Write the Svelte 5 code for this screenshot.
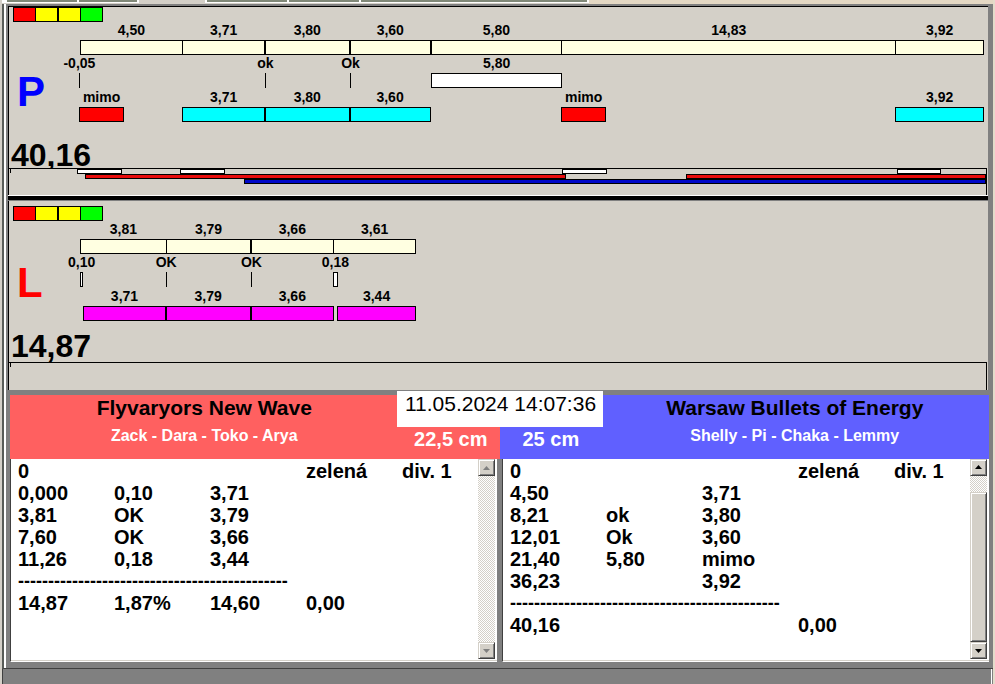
<script>
  const RANGE = 40.18;
  const lights = ['red', 'yellow', 'yellow thick', 'lime'];
  const tabs = [70, 58, 0, 81, 70, 226];

  const right = {
    letter: 'P',
    total: '40,16',
    lanes: [
      [
        { at: 0, len: 4.53, text: '4,50', kind: 'cream' },
        { at: 4.53, len: 3.66, text: '3,71', kind: 'cream' },
        { at: 8.19, len: 3.78, text: '3,80', kind: 'cream thick' },
        { at: 11.97, len: 3.6, text: '3,60', kind: 'cream thick' },
        { at: 15.57, len: 5.83, text: '5,80', kind: 'cream thick' },
        { at: 21.4, len: 14.83, text: '14,83', kind: 'cream' },
        { at: 36.23, len: 3.92, text: '3,92', kind: 'cream' }
      ],
      [
        { at: -0.05, len: 0, text: '-0,05', kind: 'tick' },
        { at: 8.22, len: 0, text: 'ok', kind: 'tick' },
        { at: 12, len: 0, text: 'Ok', kind: 'tick' },
        { at: 15.6, len: 5.8, text: '5,80', kind: 'white' }
      ],
      [
        { at: -0.05, len: 1.97, text: 'mimo', kind: 'red' },
        { at: 4.53, len: 3.66, text: '3,71', kind: 'cyan' },
        { at: 8.19, len: 3.78, text: '3,80', kind: 'cyan thick' },
        { at: 11.97, len: 3.58, text: '3,60', kind: 'cyan thick' },
        { at: 21.38, len: 1.97, text: 'mimo', kind: 'red' },
        { at: 36.23, len: 3.92, text: '3,92', kind: 'cyan' }
      ]
    ],
    tracks: [
      [
        { at: 3.02, len: 1.95, kind: 'white' },
        { at: 7.6, len: 1.95, kind: 'white' },
        { at: 24.6, len: 1.95, kind: 'white' },
        { at: 39.49, len: 1.95, kind: 'white' }
      ],
      [
        { at: 3.38, len: 21.36, kind: 'brick' },
        { at: 30.11, len: 13.33, kind: 'brick' }
      ],
      [{ at: 10.44, len: 33, kind: 'blue' }]
    ]
  };

  const left = {
    letter: 'L',
    total: '14,87',
    lanes: [
      [
        { at: 0, len: 3.81, text: '3,81', kind: 'cream' },
        { at: 3.81, len: 3.76, text: '3,79', kind: 'cream' },
        { at: 7.57, len: 3.69, text: '3,66', kind: 'cream thick' },
        { at: 11.26, len: 3.63, text: '3,61', kind: 'cream' }
      ],
      [
        { at: 0, len: 0.1, text: '0,10', kind: 'white' },
        { at: 3.81, len: 0, text: 'OK', kind: 'tick' },
        { at: 7.6, len: 0, text: 'OK', kind: 'tick' },
        { at: 11.24, len: 0.18, text: '0,18', kind: 'white' }
      ],
      [
        { at: 0.13, len: 3.65, text: '3,71', kind: 'magenta' },
        { at: 3.78, len: 3.79, text: '3,79', kind: 'magenta thick' },
        { at: 7.57, len: 3.69, text: '3,66', kind: 'magenta thick' },
        { at: 11.43, len: 3.46, text: '3,44', kind: 'magenta' }
      ]
    ],
    tracks: []
  };

  const dashes = '-'.repeat(45);

  const leftRows = [
    ['0', '', '', 'zelená', 'div. 1'],
    ['0,000', '0,10', '3,71', '', ''],
    ['3,81', 'OK', '3,79', '', ''],
    ['7,60', 'OK', '3,66', '', ''],
    ['11,26', '0,18', '3,44', '', ''],
    null,
    ['14,87', '1,87%', '14,60', '0,00', '']
  ];

  const rightRows = [
    ['0', '', '', 'zelená', 'div. 1'],
    ['4,50', '', '3,71', '', ''],
    ['8,21', 'ok', '3,80', '', ''],
    ['12,01', 'Ok', '3,60', '', ''],
    ['21,40', '5,80', 'mimo', '', ''],
    ['36,23', '', '3,92', '', ''],
    null,
    ['40,16', '', '', '0,00', '']
  ];

  // Adds to each item the free time between it and the one before.
  function spaced(items, range) {
    let end = 0;
    return items.map((item) => {
      const gap = item.at - end;
      end = item.at + item.len;
      return { ...item, before: (gap / range) * 100, size: (item.len / range) * 100 };
    });
  }
</script>

{#snippet lane(panel)}
  <section class="panel {panel.letter === 'P' ? 'right-lane' : 'left-lane'}">
    <div class="lights">
      {#each lights as light}<i class={light}></i>{/each}
    </div>
    <div class="body">
      <strong class="letter">{panel.letter}</strong>
      <div class="chart">
        {#each panel.lanes as items}
          <div class="row">
            {#each spaced(items, RANGE) as item}
              <div class="item" style="margin-left:{item.before}%;width:calc({item.size}% + 1px)">
                <span>{item.text}</span>
                <b class={item.kind}></b>
              </div>
            {/each}
          </div>
        {/each}
      </div>
    </div>
    <div class="total">{panel.total}</div>
    <div class="ruler">
      {#each panel.tracks as items}
        <div class="track">
          {#each spaced(items, 43.47) as item}
            <b class={item.kind} style="margin-left:{item.before}%;width:calc({item.size}% + 1px)"></b>
          {/each}
        </div>
      {/each}
    </div>
  </section>
{/snippet}

{#snippet list(rows, active)}
  <div class="list">
    <table>
      <tbody>
        {#each rows as row}
          <tr>
            {#if row}
              {#each row as cell}<td>{cell}</td>{/each}
            {:else}
              <td colspan="5" class="rule">{dashes}</td>
            {/if}
          </tr>
        {/each}
      </tbody>
    </table>
    <div class="scrollbar">
      <button aria-label="Up" disabled={!active}>
        <svg width="7" height="4" viewBox="0 0 7 4"><path d="M0 4h7L3.5 0z" /></svg>
      </button>
      {#if active}<div class="thumb"></div>{/if}
      <button class="down" aria-label="Down" disabled={!active}>
        <svg width="7" height="4" viewBox="0 0 7 4"><path d="M0 0h7L3.5 4z" /></svg>
      </button>
    </div>
  </div>
{/snippet}

<div class="window">
  <div class="strip">
    {#each tabs as size}
      <i class:current={size === 0} style="flex-grow:{size || 66}"></i>
    {/each}
    <i class="rest"></i>
  </div>
  <main>
    {@render lane(right)}
    <div class="divider"></div>
    {@render lane(left)}
    <div class="teams">
      <header class="team home">
        <div class="names">
          <h2>Flyvaryors New Wave</h2>
          <p>Zack - Dara - Toko - Arya</p>
        </div>
        <div class="height">22,5 cm</div>
      </header>
      <header class="team away">
        <div class="height">25 cm</div>
        <div class="names">
          <h2>Warsaw Bullets of Energy</h2>
          <p>Shelly - Pi - Chaka - Lemmy</p>
        </div>
      </header>
      <time>11.05.2024 14:07:36</time>
    </div>
    <div class="lists">
      {@render list(leftRows, false)}
      {@render list(rightRows, true)}
    </div>
  </main>
  <footer></footer>
</div>

<style>
  :global(body) {
    background: #808080;
  }
  * {
    box-sizing: border-box;
  }
  .window {
    font-family: 'Liberation Sans', Arial, sans-serif;
    font-weight: bold;
    color: #000;
    min-height: 100vh;
    display: flex;
    flex-direction: column;
    background: #808080;
    border-left: 2px solid #d4d0c8;
    border-right: 2px solid #e4dccb;
  }
  .strip {
    height: 4px;
    display: flex;
    gap: 2px;
    padding-left: 5px;
    background: #fff;
    border-bottom: 1px solid #d4d0c8;
  }
  .strip i {
    flex: 1 1 0;
    height: 2px;
    background: #808878;
  }
  .strip .current {
    height: 4px;
    background: #d4d0c8;
  }
  .strip .rest {
    flex-grow: 405;
    height: 4px;
    background: #e4d8c4;
  }
  main {
    border-left: 2px solid #585c58;
    padding: 2px 5px 6px 4px;
    background: linear-gradient(90deg, #fff 2px, #808080 2px);
    border-bottom: 1px solid #404040;
  }
  .panel {
    background: #d4d0c8;
    border-left: 1px solid #000;
  }
  .right-lane {
    border-top: 1px solid #000;
  }
  .left-lane {
    padding-top: 5px;
  }
  .divider {
    height: 6px;
    background: #000;
    border-top: 1px solid #fff;
    border-bottom: 1px solid #808080;
  }
  .lights {
    display: flex;
    height: 15px;
    width: 90px;
    margin-left: 4px;
    border: 1px solid #000;
  }
  .lights i {
    flex: 1;
  }
  .lights i + i {
    border-left: 1px solid #000;
  }
  .body {
    display: flex;
    padding-right: 4px;
  }
  .letter {
    flex: 0 0 71px;
    padding: 45px 0 0 8px;
    font-size: 42px;
    line-height: 50px;
    color: #00f;
  }
  .left-lane .letter {
    padding-top: 37px;
    color: #f00;
  }
  .chart {
    flex: 1;
    display: grid;
    grid-template-rows: 33px 33px 34px;
  }
  .row {
    display: flex;
    align-items: flex-end;
  }
  .item {
    flex: none;
    margin-right: -1px;
    display: flex;
    flex-direction: column;
    align-items: center;
    font-size: 14px;
    line-height: 18px;
    white-space: nowrap;
  }
  .item span {
    margin-bottom: 1px;
  }
  .item b {
    width: 100%;
    height: 15px;
    border: 1px solid #000;
  }
  .item .tick {
    width: 1px;
    border-width: 0 0 0 1px;
  }
  .item .thick,
  .lights .thick {
    border-left-width: 2px;
  }
  .red { background: #f00; }
  .yellow { background: #ff0; }
  .lime { background: #0f0; }
  .cream { background: #ffffe1; }
  .white { background: #fff; }
  .cyan { background: #0ff; }
  .magenta { background: #f0f; }
  .brick { background: #e80c0c; }
  .blue { background: #0008c8; }
  .total {
    height: 46px;
    padding: 14px 0 0 2px;
    font-size: 32px;
    line-height: 38px;
  }
  .left-lane .total {
    height: 41px;
    padding-top: 6px;
  }
  .ruler {
    position: relative;
    height: 27px;
    margin-right: 1px;
    border-top: 1px solid #000;
    border-right: 1px solid #000;
    background: linear-gradient(#000, #000) 1px 0 / 1px 4px no-repeat #d4d0c8;
  }
  .left-lane .ruler {
    height: 28px;
  }
  .track {
    display: flex;
    height: 5px;
  }
  .track b {
    flex: none;
    margin-right: -1px;
    border: 1px solid #000;
  }
  .teams {
    position: relative;
    display: flex;
    padding: 5px 0 0 2px;
    margin-right: -1px;
  }
  .team {
    flex: 1;
    display: flex;
    height: 64px;
  }
  .home { background: #ff6060; }
  .away { background: #6060ff; }
  .names {
    flex: 1;
    text-align: center;
  }
  h2 {
    margin: 0;
    padding-top: 1px;
    font-size: 21px;
    line-height: 24px;
  }
  p {
    margin: 0;
    padding-top: 6px;
    font-size: 16px;
    line-height: 20px;
    color: #fff;
  }
  .height {
    flex: 0 0 101px;
    padding: 32px 12px 0 0;
    font-size: 20px;
    line-height: 24px;
    color: #fff;
    text-align: right;
  }
  .away .height {
    padding: 32px 0 0 23px;
    text-align: left;
  }
  time {
    position: absolute;
    top: 1px;
    left: calc(50% + 1px);
    transform: translateX(-50%);
    width: 206px;
    height: 36px;
    padding-left: 2px;
    background: #fff;
    font-size: 21px;
    line-height: 26px;
    font-weight: normal;
    text-align: center;
    white-space: nowrap;
  }
  .lists {
    display: flex;
    gap: 5px;
    margin: 0 -1px 0 2px;
  }
  .list {
    flex: 1;
    display: flex;
    justify-content: space-between;
    height: 203px;
    background: #fff;
    border-left: 1px solid #404040;
    border-bottom: 1px solid #fff;
    padding-right: 2px;
    box-shadow: inset 0 -1px #d4d0c8;
  }
  table {
    table-layout: fixed;
    width: 456px;
    height: max-content;
    margin: 1px 0 0 7px;
    border-collapse: collapse;
    font-size: 20px;
    line-height: 22px;
  }
  td {
    width: 96px;
    height: 22px;
    padding: 0;
    white-space: nowrap;
  }
  td:nth-child(5) {
    width: 72px;
  }
  .rule {
    font-size: 18px;
  }
  .scrollbar {
    flex: 0 0 17px;
    display: flex;
    flex-direction: column;
    margin-bottom: 2px;
    background: repeating-conic-gradient(#d4d0c8 0 25%, #fff 0 50%) 0 0 / 2px 2px;
  }
  button,
  .thumb {
    background: #d4d0c8;
    border: 1px solid;
    border-color: #d4d0c8 #404040 #404040 #d4d0c8;
    box-shadow: inset 1px 1px #fff, inset -1px -1px #808080;
  }
  button {
    display: flex;
    align-items: center;
    justify-content: center;
    height: 17px;
    padding: 0;
  }
  button:disabled path {
    fill: #808080;
  }
  .down {
    margin-top: auto;
  }
  .thumb {
    height: 151px;
    margin-top: 16px;
  }
  footer {
    flex: 1;
    min-height: 15px;
    margin-right: 1px;
    border-left: 1px solid #404040;
    border-right: 1px solid #fff;
  }
</style>
